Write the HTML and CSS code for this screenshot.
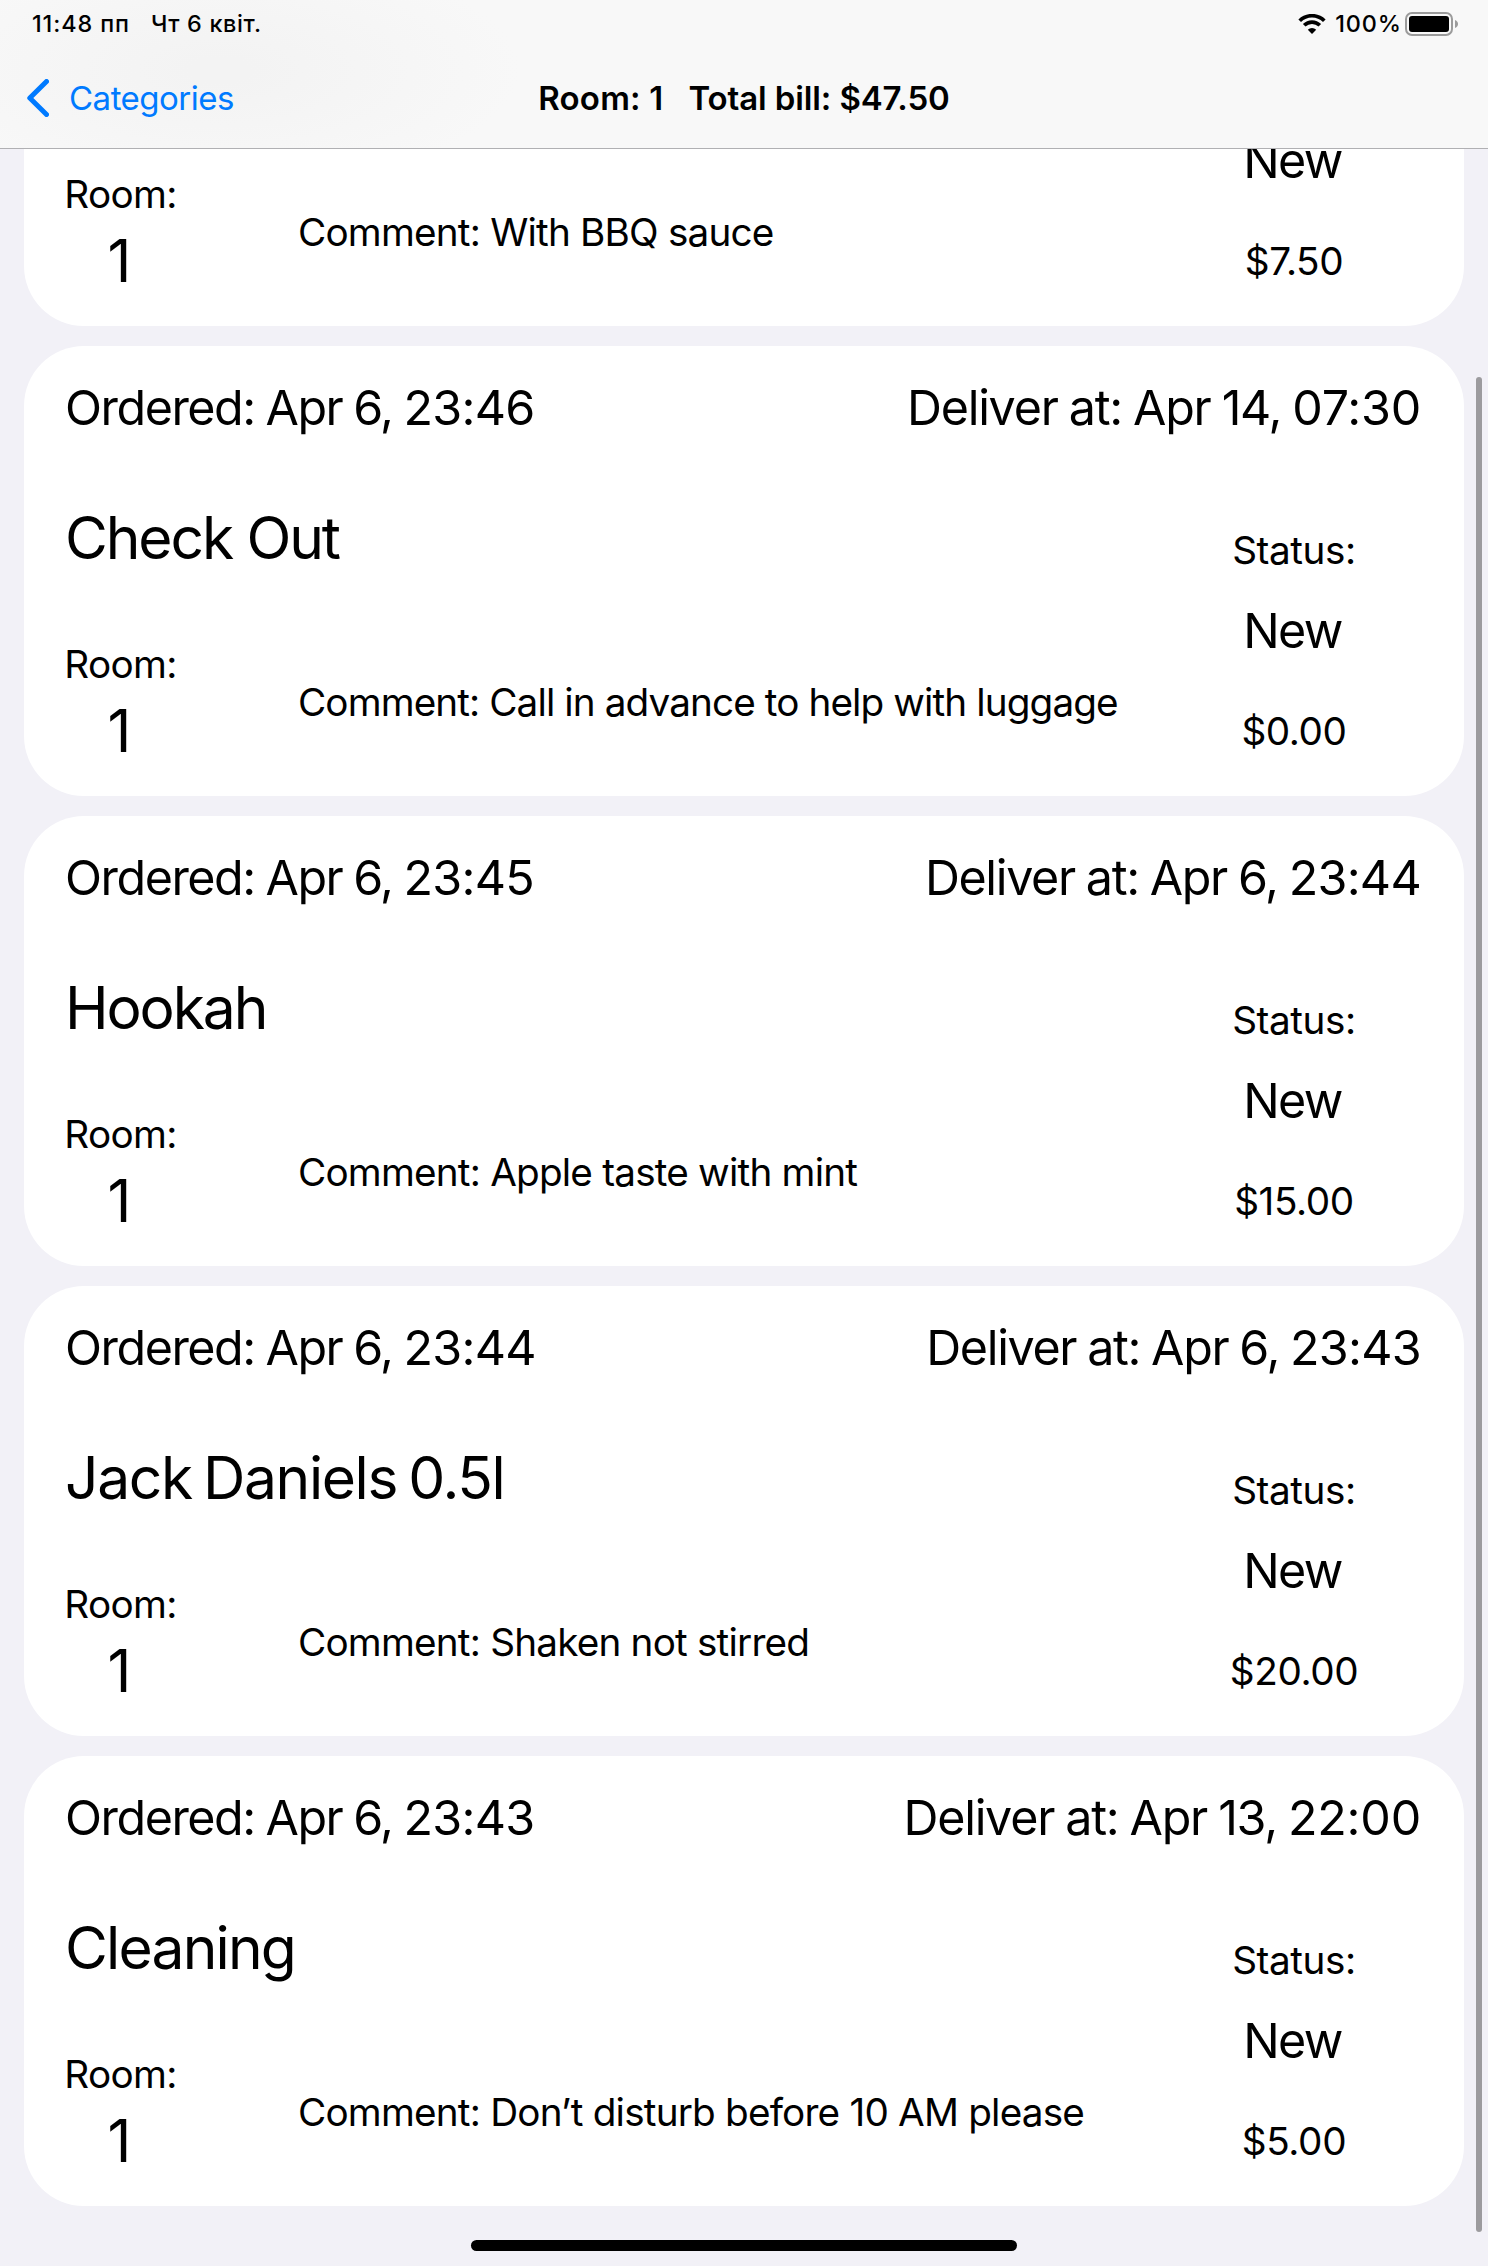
FILE: index.html
```html
<!DOCTYPE html>
<html lang="en">
<head>
<meta charset="utf-8">
<title>Room orders</title>
<link rel="stylesheet" href="styles.css">
</head>
<body>
<header class="header">
  <div class="status-bar">
    <span class="time">11:48 пп</span>
    <span class="date">Чт 6 квіт.</span>
    <svg class="wifi" width="28" height="20" viewBox="0 0 28 20">
      <path d="M1.7 6.8A17.4 17.4 0 0 1 26.3 6.8M6.2 11.3A11 11 0 0 1 21.8 11.3" fill="none" stroke="#000" stroke-width="3.7"/>
      <path d="M14 20L9.8 15.8A6 6 0 0 1 18.2 15.8Z"/>
    </svg>
    <span class="percent">100%</span>
    <svg class="battery" width="53" height="24" viewBox="0 0 53 24">
      <rect x="1" y="1" width="46" height="22" rx="6" fill="none" stroke="#9b9b9b" stroke-width="2"/>
      <rect x="4" y="4" width="40" height="16" rx="3"/>
      <path d="M50 8C52.2 8.8 53 10.3 53 12S52.2 15.200 50 16Z" fill="#9b9b9b"/>
    </svg>
  </div>
  <nav class="nav-bar">
    <a class="back">
      <svg class="chevron" width="22" height="38" viewBox="0 0 22 38">
        <path d="M19.500 2.500L2.800 19L19.500 35.500" fill="none" stroke="#007aff" stroke-width="5" stroke-linecap="round" stroke-linejoin="round"/>
      </svg>
      <span class="back-label">Categories</span>
    </a>
    <h1 class="nav-title"><span class="nav-room">Room: 1</span><span class="nav-total">Total bill: $47.50</span></h1>
  </nav>
</header>

<main class="orders">
  <article class="card">
    <div class="dates"></div>
    <div class="body">
      <div class="info">
        <h2 class="item"></h2>
        <div class="details">
          <div class="room"><span class="label">Room:</span><span class="number">1</span></div>
          <p class="comment">Comment: With BBQ sauce</p>
        </div>
      </div>
      <div class="state"><span class="label"></span><span class="status">New</span><span class="price">$7.50</span></div>
    </div>
  </article>

  <article class="card">
    <div class="dates"><span class="ordered">Ordered: Apr 6, <time>23:46</time></span><span class="deliver long">Deliver at: Apr 14, <time>07:30</time></span></div>
    <div class="body">
      <div class="info">
        <h2 class="item">Check Out</h2>
        <div class="details">
          <div class="room"><span class="label">Room:</span><span class="number">1</span></div>
          <p class="comment tight">Comment: Call in advance to help with luggage</p>
        </div>
      </div>
      <div class="state"><span class="label">Status:</span><span class="status">New</span><span class="price">$0.00</span></div>
    </div>
  </article>

  <article class="card">
    <div class="dates"><span class="ordered">Ordered: Apr 6, <time>23:45</time></span><span class="deliver">Deliver at: Apr 6, <time>23:44</time></span></div>
    <div class="body">
      <div class="info">
        <h2 class="item">Hookah</h2>
        <div class="details">
          <div class="room"><span class="label">Room:</span><span class="number">1</span></div>
          <p class="comment">Comment: Apple taste with mint</p>
        </div>
      </div>
      <div class="state"><span class="label">Status:</span><span class="status">New</span><span class="price">$15.00</span></div>
    </div>
  </article>

  <article class="card">
    <div class="dates"><span class="ordered">Ordered: Apr 6, <time>23:44</time></span><span class="deliver">Deliver at: Apr 6, <time>23:43</time></span></div>
    <div class="body">
      <div class="info">
        <h2 class="item wide">Jack Daniels 0.5l</h2>
        <div class="details">
          <div class="room"><span class="label">Room:</span><span class="number">1</span></div>
          <p class="comment">Comment: Shaken not stirred</p>
        </div>
      </div>
      <div class="state"><span class="label">Status:</span><span class="status">New</span><span class="price">$20.00</span></div>
    </div>
  </article>

  <article class="card">
    <div class="dates"><span class="ordered">Ordered: Apr 6, <time>23:43</time></span><span class="deliver long">Deliver at: Apr 13, <time>22:00</time></span></div>
    <div class="body">
      <div class="info">
        <h2 class="item loose">Cleaning</h2>
        <div class="details">
          <div class="room"><span class="label">Room:</span><span class="number">1</span></div>
          <p class="comment">Comment: Don’t disturb before 10 AM please</p>
        </div>
      </div>
      <div class="state"><span class="label">Status:</span><span class="status">New</span><span class="price">$5.00</span></div>
    </div>
  </article>
</main>

<div class="scrollbar"></div>
<div class="home-indicator"></div>
</body>
</html>
```

FILE: styles.css
```css
* {
  box-sizing: border-box;
  margin: 0;
  padding: 0;
}

body {
  position: relative;
  display: flex;
  flex-direction: column;
  height: 2266px;
  overflow: hidden;
  background: #f2f1f7;
  color: #000;
  font-family: Inter, "Liberation Sans", sans-serif;
  white-space: nowrap;
}

h1, h2 {
  font-weight: 400;
}

/* Header */
.header {
  flex: none;
  height: 149px;
  border-bottom: 1px solid #b0b0b3;
  background:
    radial-gradient(ellipse 300px 120px at 220px 70px, #f3f3f3 10%, rgba(243, 243, 243, 0)),
    #f8f8f8;
}

.status-bar {
  display: flex;
  align-items: center;
  height: 48px;
  padding: 0 30px 0 32px;
  font-size: 23.4px;
  font-weight: 500;
  line-height: 30px;
}

.time,
.date,
.percent {
  margin-top: -1px;
}

.time {
  letter-spacing: 0.9px;
}

.date {
  margin-left: 21px;
  letter-spacing: 0.65px;
}

.wifi {
  margin-left: auto;
}

.percent {
  margin-right: 3px;
  margin-left: 9px;
  letter-spacing: 0.9px;
}

.nav-bar {
  display: grid;
  grid-template-columns: 1fr auto 1fr;
  align-items: center;
  height: 100px;
  font-size: 33px;
  line-height: 44px;
}

.back {
  display: flex;
  align-items: center;
  gap: 20px;
  padding-left: 27px;
  color: #007aff;
}

.back-label {
  letter-spacing: -0.5px;
}

.nav-title {
  display: flex;
  gap: 25px;
  font-size: 33px;
  font-weight: 600;
}

.nav-room {
  letter-spacing: 0.2px;
}

.nav-total {
  letter-spacing: -0.12px;
}

/* Order list, scrolled to its end */
.orders {
  flex: 1;
  min-height: 0;
  display: flex;
  flex-direction: column;
  justify-content: flex-end;
  gap: 20px;
  padding: 0 24px 60px;
  overflow: hidden;
}

.card {
  flex: none;
  height: 450px;
  padding: 32px 42px 0 40px;
  border-radius: 60px;
  background: #fff;
}

.dates {
  display: flex;
  justify-content: space-between;
  height: 60px;
  padding-right: 1px;
  padding-left: 1px;
  font-size: 48.4px;
  line-height: 60px;
  word-spacing: -1.3px;
}

.ordered {
  letter-spacing: -1.47px;
}

.deliver {
  letter-spacing: -1.33px;
}

.deliver.long {
  letter-spacing: -1.23px;
}

.dates time {
  letter-spacing: -0.7px;
}

.dates .long time {
  letter-spacing: -0.2px;
}

.body {
  display: grid;
  grid-template-columns: 1fr 256px;
}

.item {
  height: 72px;
  margin-top: 64px;
  padding-left: 1px;
  font-size: 58.7px;
  line-height: 72px;
  letter-spacing: -2.1px;
}

.item.loose {
  letter-spacing: -1.8px;
}

.item.wide {
  letter-spacing: -1.35px;
  word-spacing: -4px;
}

.details {
  display: flex;
  gap: 121px;
  margin-top: 66px;
  font-size: 38.7px;
  line-height: 48px;
}

.room {
  display: flex;
  flex-direction: column;
  align-items: center;
  gap: 7px;
  width: 113px;
  letter-spacing: -0.65px;
}

.number {
  padding-right: 2px;
  font-size: 58.7px;
  line-height: 72px;
  letter-spacing: 0;
}

.comment {
  margin-top: 38px;
  letter-spacing: -0.8px;
}

.comment.tight {
  letter-spacing: -0.9px;
}

.state {
  display: flex;
  flex-direction: column;
  align-items: center;
  padding-top: 88px;
  font-size: 38.7px;
  line-height: 48px;
  letter-spacing: -0.4px;
}

.state .label {
  height: 48px;
}

.status {
  margin-top: 27px;
  padding-right: 3px;
  font-size: 48.4px;
  line-height: 60px;
  letter-spacing: -1.6px;
}

.price {
  margin-top: 46px;
  letter-spacing: -0.4px;
}

/* Overlays */
.scrollbar {
  position: absolute;
  top: 377px;
  right: 6px;
  width: 6px;
  height: 1855px;
  border-radius: 3px;
  background: #9c9b9e;
}

.home-indicator {
  position: absolute;
  bottom: 15px;
  left: 471px;
  width: 546px;
  height: 11px;
  border-radius: 6px;
  background: #000;
}
```
